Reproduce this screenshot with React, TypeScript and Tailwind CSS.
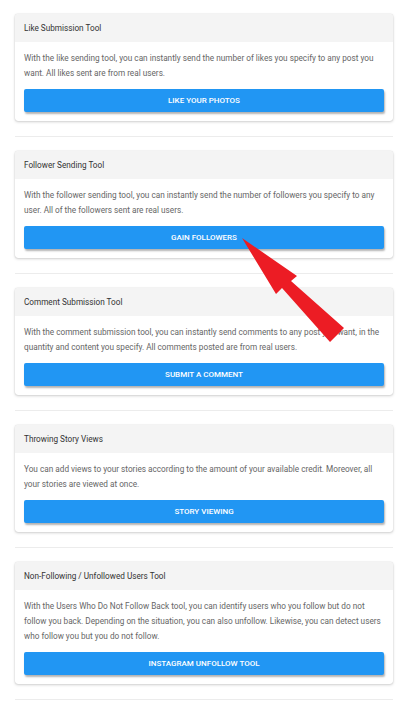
const TOOLS = [
  {
    title: 'Like Submission Tool',
    body: 'With the like sending tool, you can instantly send the number of likes you specify to any post you want. All likes sent are from real users.',
    button: 'Like your photos',
  },
  {
    title: 'Follower Sending Tool',
    body: 'With the follower sending tool, you can instantly send the number of followers you specify to any user. All of the followers sent are real users.',
    button: 'Gain followers',
  },
  {
    title: 'Comment Submission Tool',
    body: 'With the comment submission tool, you can instantly send comments to any post you want, in the quantity and content you specify. All comments posted are from real users.',
    button: 'Submit a comment',
  },
  {
    title: 'Throwing Story Views',
    body: 'You can add views to your stories according to the amount of your available credit. Moreover, all your stories are viewed at once.',
    button: 'Story viewing',
  },
  {
    title: 'Non-Following / Unfollowed Users Tool',
    body: 'With the Users Who Do Not Follow Back tool, you can identify users who you follow but do not follow you back. Depending on the situation, you can also unfollow. Likewise, you can detect users who follow you but you do not follow.',
    button: 'Instagram unfollow tool',
  },
];

function ToolCard({ title, body, button }: { title: string; body: string; button: string }) {
  return (
    <div className="overflow-hidden rounded-[3px] bg-white shadow-[0_1px_3px_rgba(0,0,0,0.18),0_0_1px_rgba(0,0,0,0.25)]">
      <div className="flex h-[28px] items-center bg-[#f4f4f4] px-[9px] text-[8.2px] text-[#333]">{title}</div>
      <div className="px-[9px] pb-[9px] pt-[9px]">
        <p className="text-[8.22px] leading-[15px] text-[#666]">{body}</p>
        <button className="mt-[8px] flex h-[23px] w-full items-center justify-center rounded-[2px] bg-[#2196f3] text-[8px] font-medium uppercase text-white shadow-[1px_2px_2px_rgba(0,0,0,0.3)]">
          {button}
        </button>
      </div>
    </div>
  );
}

export default function App() {
  return (
    <div className="relative min-h-screen bg-white font-['Roboto',sans-serif]">
      <div className="w-[393px] pl-[15px] pt-[14px]">
        {TOOLS.map((t) => (
          <div key={t.title} className="pb-[14px]">
            <ToolCard {...t} />
            <div className="mt-[15px] h-px bg-[#ececec]" />
          </div>
        ))}
      </div>

      {/* red pointer arrow */}
      <svg className="pointer-events-none absolute left-0 top-0" width="416" height="703" viewBox="0 0 416 703">
        <polygon
          points="242,238 297,276 291,281 344,328 330,342 282,288 276,294"
          fill="#ec1c24"
        />
      </svg>
    </div>
  );
}
